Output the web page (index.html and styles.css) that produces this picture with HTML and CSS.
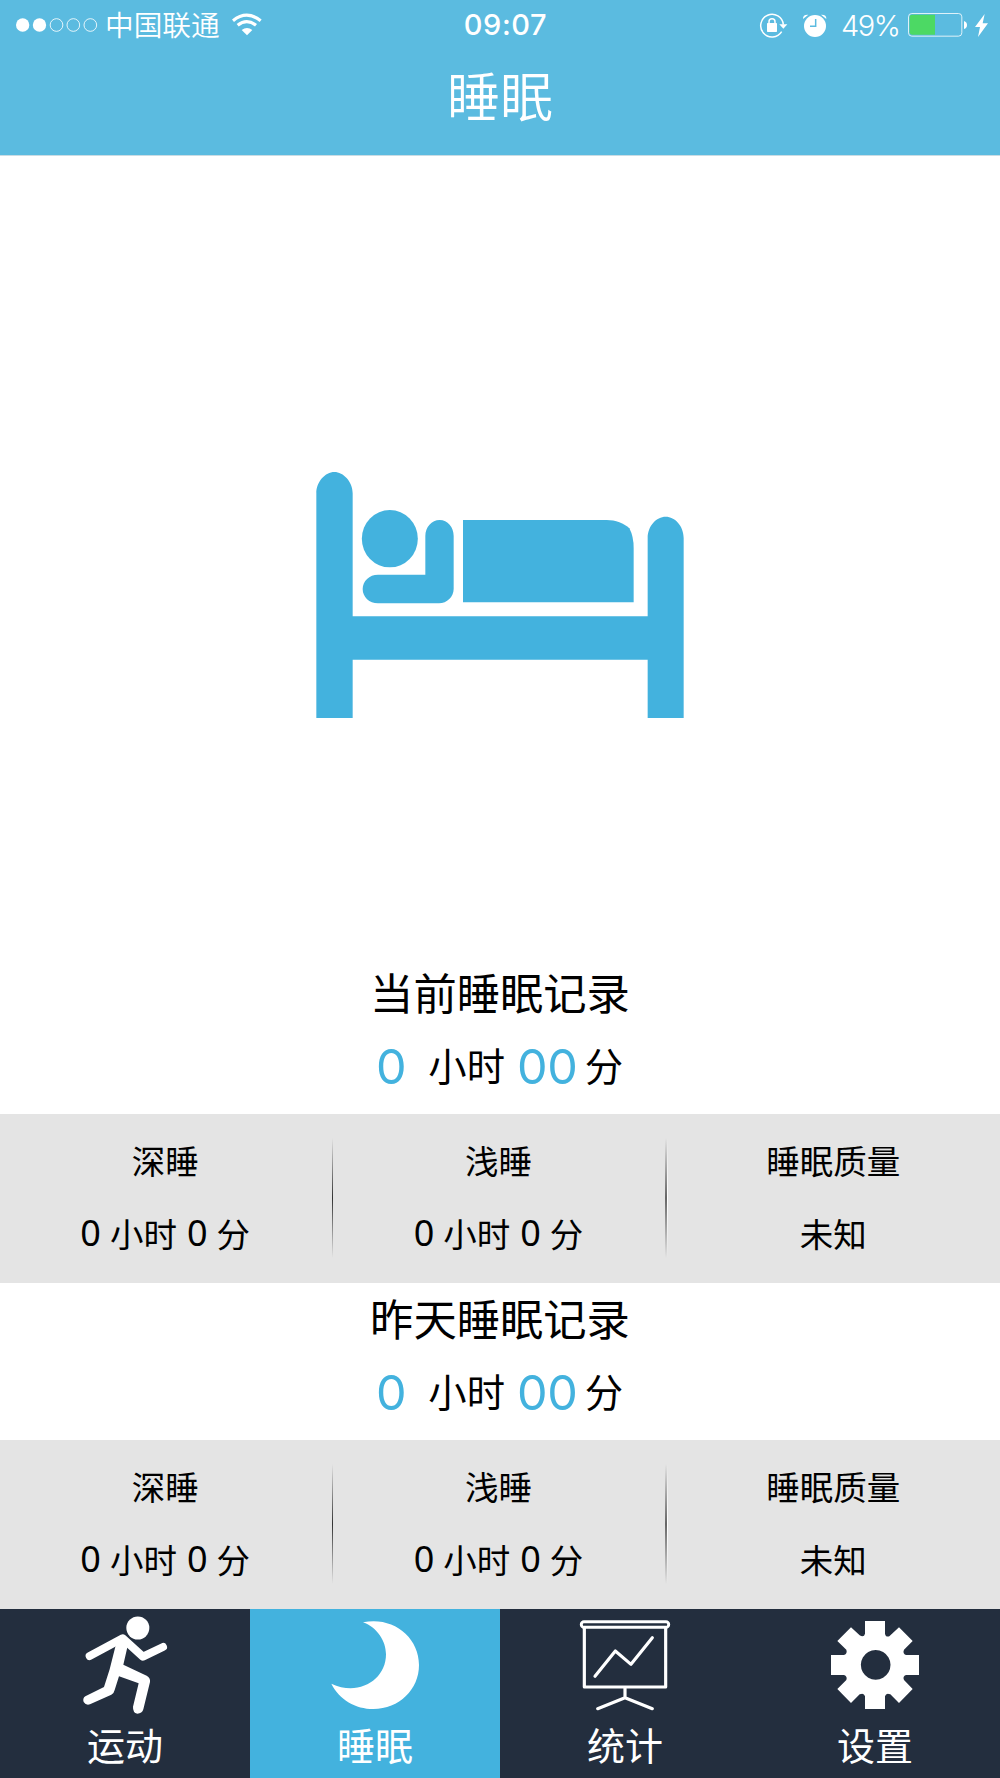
FILE: index.html
```html
<!DOCTYPE html>
<html lang="zh-CN">
<head>
<meta charset="utf-8">
<title>睡眠</title>
<link rel="stylesheet" href="styles.css">
</head>
<body>
<div class="screen">
  <header class="header">
    <div class="status">
      <div class="status-left">
        <svg class="signal" viewBox="45 49 249 48" width="83" height="16">
          <g fill="#fff"><circle cx="68" cy="73" r="20"/><circle cx="118.500" cy="73" r="20"/></g>
          <g fill="none" stroke="#fff" stroke-width="2.500"><circle cx="169.500" cy="73" r="19"/><circle cx="220" cy="73" r="19"/><circle cx="271" cy="73" r="19"/></g>
        </svg>
        <span class="carrier">中国联通</span>
        <svg class="wifi" viewBox="693 34 96 72" width="32" height="24" fill="none" stroke="#fff" stroke-width="9.500">
          <path d="M699 60Q740 27 782 60M713 74Q740 52 768 74"/>
          <path d="M725 88Q741 76 757 88L741 104Z" fill="#fff" stroke="none"/>
        </svg>
      </div>
      <div class="time">09:07</div>
      <div class="status-right">
        <svg class="lock" viewBox="177 33 90 78" width="30" height="26">
          <path d="M245 92A34 34 0 1 1 250 71" fill="none" stroke="#fff" stroke-width="4.500"/>
          <path d="M238 70H262L250 83Z" fill="#fff"/>
          <rect x="201" y="66" width="30" height="27" rx="2" fill="#fff"/>
          <path d="M207 69V62a9 9 0 0 1 18 0v7" fill="none" stroke="#fff" stroke-width="4.500"/>
        </svg>
        <svg class="alarm" viewBox="306 36 78 75" width="26" height="25">
          <circle cx="345" cy="75" r="33" fill="#fff"/>
          <path d="M309 54Q308 40 325 41ZM379 54Q380 40 363 41Z" fill="#fff"/>
          <path d="M347 54V76H330" fill="none" stroke="#5bbbe0" stroke-width="4.500"/>
        </svg>
        <span class="percent">49%</span>
        <svg class="battery" viewBox="621 36 183 78" width="61" height="26">
          <path d="M705 44H636q-7 0-7 7V97q0 7 7 7H705Z" fill="#4cd964"/>
          <rect x="625.500" y="40.500" width="160" height="68" rx="10" fill="none" stroke="#fff" stroke-opacity=".8" stroke-width="3"/>
          <path d="M792 63q9 3 9 12t-9 12Z" fill="#fff"/>
        </svg>
        <svg class="bolt" viewBox="822 36 45 75" width="15" height="25"><path d="M854 39L825 78H840L834 108L864 67H848Z" fill="#fff"/></svg>
      </div>
    </div>
    <h1 class="title">睡眠</h1>
  </header>

  <main class="main">
    <div class="hero">
      <svg viewBox="0 0 1200 810" width="400" height="270" fill="#43b2de">
        <path d="M49 774V100C49 65 76 36 103 36S158 65 158 100V469H1043V234C1043 198 1069 170 1097 170S1151 198 1151 234V774H1043V599H158V774Z"/>
        <ellipse cx="269.500" cy="236" rx="84" ry="86"/>
        <path d="M376 344V228C376 201 395 180 419 180S461 201 461 228V387C461 410 441 430 417 430H234C208 430 188 411 188 387S208 344 234 344Z"/>
        <path d="M489 180H920C946 180 973 190 988 205Q1001 229 1001 265V427H489Z"/>
      </svg>
    </div>

    <section class="record">
      <h2 class="record-title">当前睡眠记录</h2>
      <p class="duration"><span class="num hours">0</span><span class="unit-h">小时</span><span class="num mins">00</span><span>分</span></p>
    </section>
    <section class="stats">
      <div class="stat"><span>深睡</span><span class="value"><b>0</b><i>小时</i><b>0</b><i>分</i></span></div>
      <div class="stat"><span>浅睡</span><span class="value"><b>0</b><i>小时</i><b>0</b><i>分</i></span></div>
      <div class="stat"><span>睡眠质量</span><span>未知</span></div>
    </section>

    <section class="record record-past">
      <h2 class="record-title">昨天睡眠记录</h2>
      <p class="duration"><span class="num hours">0</span><span class="unit-h">小时</span><span class="num mins">00</span><span>分</span></p>
    </section>
    <section class="stats">
      <div class="stat"><span>深睡</span><span class="value"><b>0</b><i>小时</i><b>0</b><i>分</i></span></div>
      <div class="stat"><span>浅睡</span><span class="value"><b>0</b><i>小时</i><b>0</b><i>分</i></span></div>
      <div class="stat"><span>睡眠质量</span><span>未知</span></div>
    </section>
  </main>

  <nav class="tabs">
    <a class="tab">
      <svg viewBox="225 30 300 321" width="100" height="107" fill="none" stroke="#fff" stroke-linecap="round" stroke-linejoin="round">
        <circle cx="413.500" cy="84" r="34.500" fill="#fff" stroke="none"/>
        <path d="M269 168L368 115L429 170L489 141" stroke-width="24"/>
        <path d="M346 140L368 104L386 120L381 146L370 194L440 227Q452 234 450 246L430 328Q426 341 412 341Q398 338 399 320L416 250L357 229L344 270Q342 280 334 284L270 313Q258 317 251 306Q247 295 256 289L312 261L329 208Z" fill="#fff" stroke="none"/>
      </svg>
      <span>运动</span>
    </a>
    <a class="tab active">
      <svg viewBox="975 30 300 321" width="100" height="107"><path d="M1089 67C1176 48 1257 109 1257 195C1257 268 1198 327 1120 327C1067 327 1018 299 994 251C1076 290 1158 240 1158 163C1158 123 1132 83 1089 67Z" fill="#fff"/></svg>
      <span>睡眠</span>
    </a>
    <a class="tab">
      <svg viewBox="225 30 300 321" width="100" height="107" fill="none" stroke="#fff" stroke-width="9.500" stroke-linecap="round" stroke-linejoin="round">
        <rect x="244" y="65" width="262" height="17" rx="8" stroke-width="9"/>
        <path d="M253 84V261H497V84M375 263V293M293 326L375 293L457 326M285 229L346 153L393 193L457 113"/>
      </svg>
      <span>统计</span>
    </a>
    <a class="tab">
      <svg viewBox="975 30 300 321" width="100" height="107">
        <path fill="#fff" fill-rule="evenodd" d="M1095 63H1155V101Q1157 112 1168 109L1197 82L1238 123L1212 149Q1207 161 1218 165H1257V225H1218Q1207 229 1212 240L1238 267L1197 309L1171 283Q1158 277 1155 289V327H1095V289Q1092 277 1079 283L1053 309L1012 267L1039 240Q1043 229 1032 225H993V165H1032Q1043 161 1039 149L1012 123L1053 82L1079 106Q1092 113 1095 101ZM1127 150a44.500 44.500 0 1 0 .1 0Z"/>
      </svg>
      <span>设置</span>
    </a>
  </nav>
</div>
</body>
</html>
```
FILE: styles.css
```css
* { box-sizing: border-box; }
body { margin: 0; background: #fff; font-family: "Noto Sans CJK SC", sans-serif; color: #000; }
svg { display: block; flex: none; }
h1, h2, p { margin: 0; font-weight: 400; }

.screen { width: 1000px; height: 1778px; display: flex; flex-direction: column; }

.header { height: 156px; background: #5bbbe0; color: #fff; border-bottom: 1px solid #c9dce4; }
.status { height: 50px; display: grid; grid-template-columns: 1fr auto 1fr; align-items: center; line-height: 50px; padding-left: 15px; padding-right: 11px; }
.status-left, .status-right { display: flex; align-items: center; height: 50px; }
.status-right { justify-content: flex-end; }
.carrier { font-size: 28.700px; font-weight: 350; margin-left: 7px; margin-top: -3px; }
.wifi { margin-left: 11px; margin-top: -3px; }
.time { font: 500 29px/50px Inter, sans-serif; letter-spacing: .6px; margin-left: 7px; }
.percent { font: 350 29px/50px Inter, sans-serif; margin-left: 13px; width: 61px; letter-spacing: -1.500px; padding-top: 1px; }
.alarm { margin-left: 13px; }
.lock { margin-top: -1px; }
.battery { margin-left: 5px; }
.bolt { margin-left: 6px; }
.title { font-size: 53px; line-height: 80px; text-align: center; margin-top: 4px; font-weight: 350; }

.main { flex: 1; display: flex; flex-direction: column; }
.hero { flex: 1; display: flex; flex-direction: column; align-items: center; padding-top: 304px; }

.record { height: 156px; text-align: center; flex: none; }
.record-past { height: 157px; padding-top: 1px; }
.record-title { font-size: 43.300px; line-height: 60px; padding-top: 3px; }
.duration { display: flex; align-items: center; justify-content: center; font-size: 38.300px; height: 80px; line-height: 80px; margin-top: 4px; padding-right: 1px; }
.num { font-family: Inter, sans-serif; font-size: 48.500px; font-weight: 400; color: #43b2de; padding-top: 4px; letter-spacing: -.2px; }
.hours { margin-right: 22px; }
.unit-h { margin-right: 12px; }
.mins { margin-right: 7px; }

.stats { height: 169px; flex: none; background: #e4e4e4; display: grid; grid-template-columns: repeat(3, 1fr); }
.stat { position: relative; display: flex; flex-direction: column; align-items: center; font-size: 33.500px; line-height: 73px; padding: 9px 3px 0 0; }
.stat:nth-child(3) { padding-right: 0; }
.stat + .stat::before { content: ""; position: absolute; left: -1px; top: 24px; width: 1px; height: 120px; background: linear-gradient(transparent, #333 50%, transparent); }
.stat:nth-child(3)::before { left: -2px; width: 2px; background: linear-gradient(transparent, #666 50%, transparent); }
.stat:nth-child(3)::after { content: ""; position: absolute; left: 0; top: 24px; width: 1px; height: 120px; background: linear-gradient(transparent, #fff 50%, transparent); }
.value { display: flex; }
.value b { font-family: "Noto Sans", sans-serif; font-size: 36px; font-weight: 400; margin-right: 9px; }
.value i { font-style: normal; margin-right: 10px; }
.value i:last-child { margin-right: 0; }

.tabs { height: 169px; flex: none; display: grid; grid-template-columns: repeat(4, 1fr); background: #232e3e; color: #fff; font-size: 38px; }
.tab { display: flex; flex-direction: column; align-items: center; padding-top: 1px; line-height: 54px; }
.active { background: #43b2de; }
```
